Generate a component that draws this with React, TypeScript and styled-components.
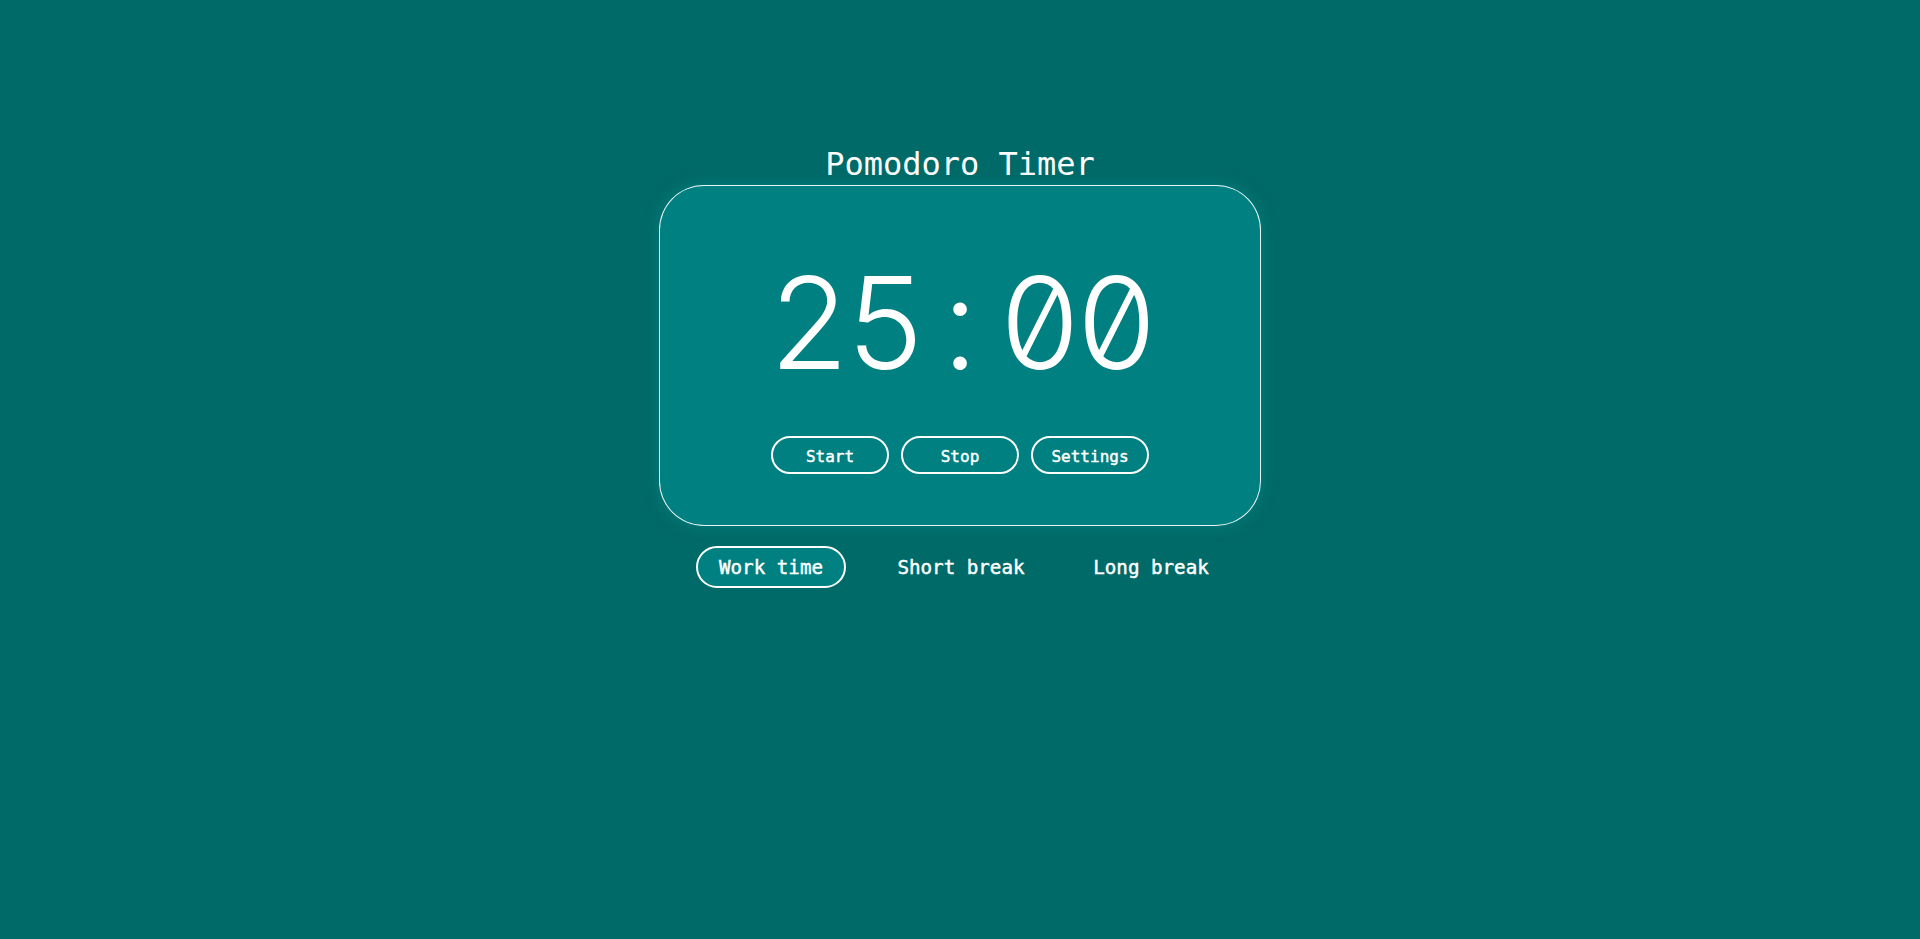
import styled, { createGlobalStyle } from "styled-components";

const GlobalStyle = createGlobalStyle`
	html, body {
		margin: 0;
		padding: 0;
		background: #006a68;
	}
	body {
		font-family: "DejaVu Sans Mono", "Liberation Mono", monospace;
		color: #ffffff;
	}
`;

const StyledPage = styled.main`
	min-height: 939px;
	display: flex;
	flex-direction: column;
	align-items: center;
	padding-top: 144px;
	box-sizing: border-box;
`;

const StyledTitle = styled.h1`
	margin: 0;
	font-size: 32px;
	font-weight: 400;
	line-height: 41px;
`;

const StyledCard = styled.section`
	width: 602px;
	height: 341px;
	box-sizing: border-box;
	background: #008080;
	border: 1px solid rgba(255, 255, 255, 0.9);
	border-radius: 45px;
	box-shadow: 0 0 14px rgba(0, 128, 128, 0.9);
	display: flex;
	flex-direction: column;
	align-items: center;
	padding-top: 73px;
`;

const StyledClock = styled.div`
	display: flex;
	font-family: "Inter", "DejaVu Sans", sans-serif;
	font-size: 128px;
	font-weight: 300;
	line-height: 128px;
	font-feature-settings: "zero" 1, "tnum" 1;
`;

const StyledClockCell = styled.span`
	display: inline-block;
	width: 0.6em;
	text-align: center;
`;

const StyledControls = styled.div`
	display: flex;
	gap: 12px;
	margin-top: 49px;
`;

const StyledControl = styled.button`
	width: 118px;
	height: 38px;
	box-sizing: border-box;
	padding: 2px 0 0;
	background: transparent;
	border: 2px solid #ffffff;
	border-radius: 999px;
	color: #ffffff;
	font-family: inherit;
	font-size: 16px;
	font-weight: 400;
	-webkit-text-stroke: 0.45px #ffffff;
	cursor: pointer;
`;

const StyledTabs = styled.nav`
	display: grid;
	grid-template-columns: repeat(3, 190px);
	justify-items: center;
	margin-top: 20px;
	margin-left: 2px;
`;

const StyledTab = styled.button<{ $active?: boolean }>`
	box-sizing: border-box;
	padding: 9px 21px 7px;
	line-height: 22px;
	background: ${(p) => (p.$active ? "#008080" : "transparent")};
	border: 2px solid ${(p) => (p.$active ? "#ffffff" : "transparent")};
	border-radius: 999px;
	color: #ffffff;
	font-family: inherit;
	font-size: 19.2px;
	font-weight: 400;
	-webkit-text-stroke: 0.45px #ffffff;
	white-space: nowrap;
	cursor: pointer;
`;

const time = "25:00";

export default function App() {
	return (
		<>
			<GlobalStyle />
			<StyledPage>
				<StyledTitle>Pomodoro Timer</StyledTitle>
				<StyledCard>
					<StyledClock>
						{time.split("").map((ch, i) => (
							<StyledClockCell key={i}>{ch}</StyledClockCell>
						))}
					</StyledClock>
					<StyledControls>
						<StyledControl>Start</StyledControl>
						<StyledControl>Stop</StyledControl>
						<StyledControl>Settings</StyledControl>
					</StyledControls>
				</StyledCard>
				<StyledTabs>
					<StyledTab $active>Work time</StyledTab>
					<StyledTab>Short break</StyledTab>
					<StyledTab>Long break</StyledTab>
				</StyledTabs>
			</StyledPage>
		</>
	);
}
